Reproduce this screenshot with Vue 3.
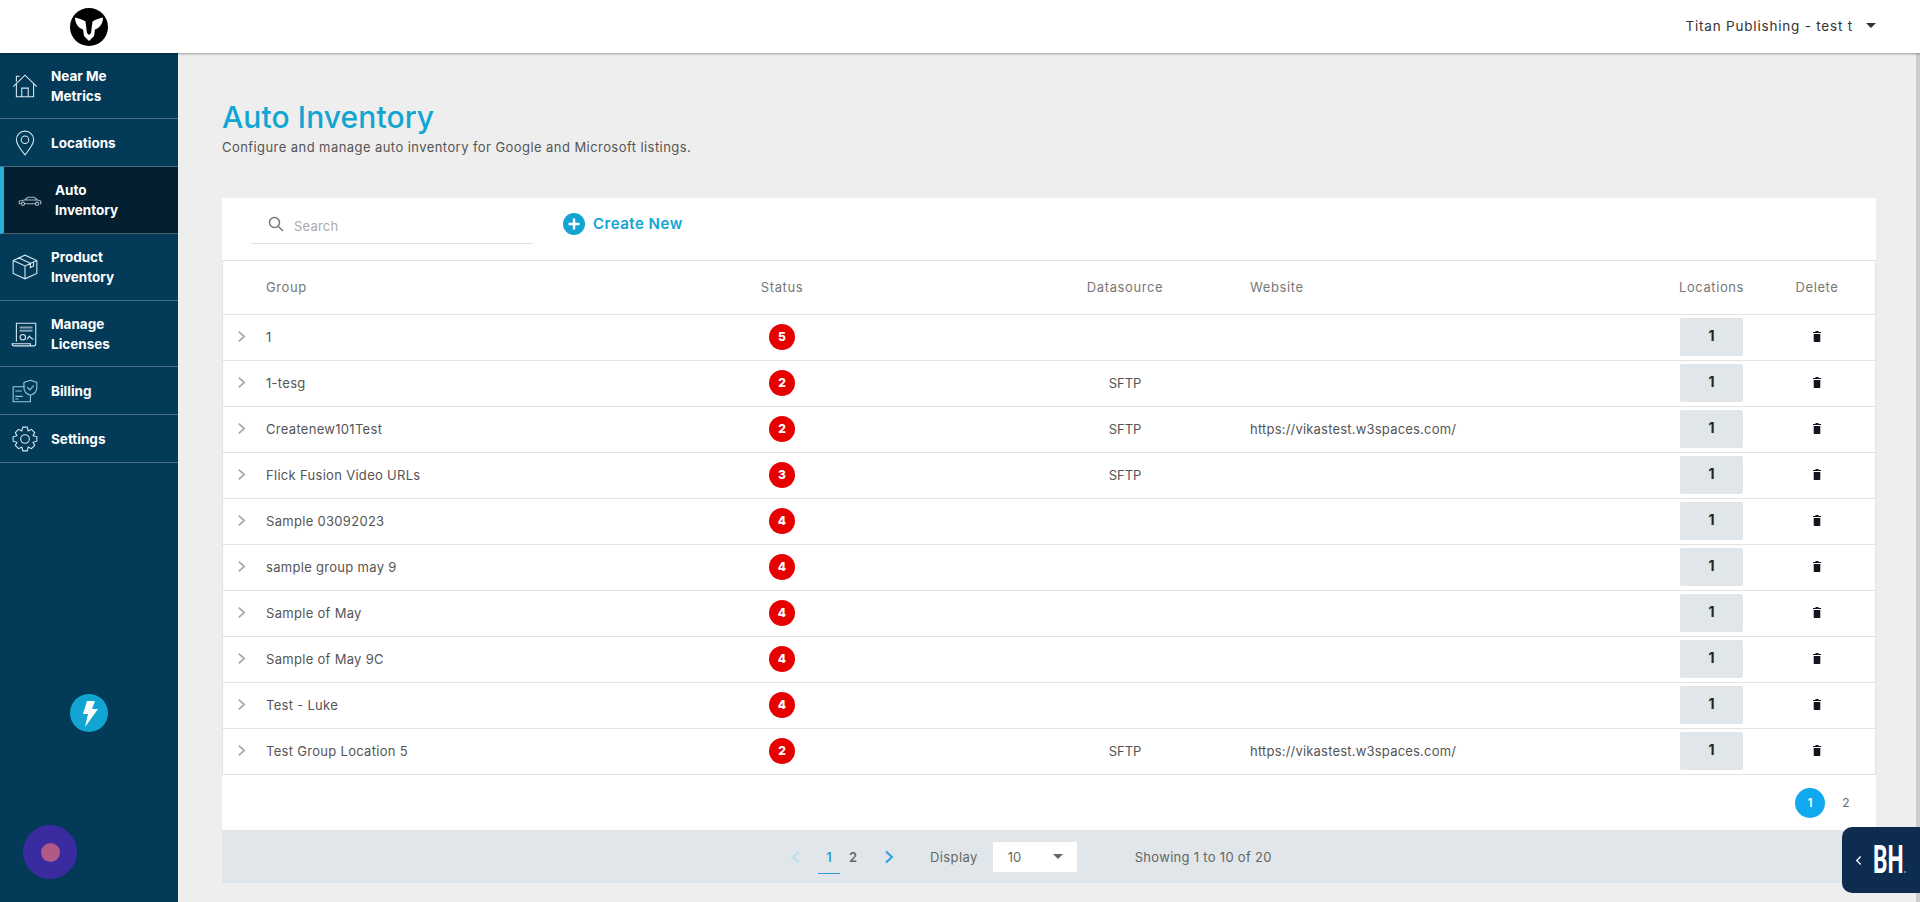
<template>
  <div class="app">
    <header class="topbar">
      <div class="logo-wrap">
        <svg class="logo" viewBox="0 0 38 38">
          <circle cx="19" cy="19" r="19" fill="#000" />
          <path d="M5 9.500C9 10 13 12 15.500 13.500L17 25l2 2 2-2 1.500-11.500C25 12 29 10 33 9.500 33 15 30 20 25 21.500L24 28l-5 5-5-5-1-6.500C8 20 5 15 5 9.500z" fill="#fff" />
        </svg>
      </div>
      <div class="account">
        <span>Titan Publishing - test t</span>
        <i class="caret"></i>
      </div>
    </header>

    <div class="body">
      <aside class="sidebar">
        <a
          v-for="item in menu"
          :key="item.key"
          class="nav-item"
          :class="[item.size, { active: item.key === 'auto' }]"
        >
          <span class="nav-icon">
            <svg v-if="item.key === 'metrics'" viewBox="0 0 26 26">
              <path d="M2 13.500 13 3l11 10.500M5 11v12h16V11M10 23v-8h6v8M5 9V4h3" />
            </svg>
            <svg v-else-if="item.key === 'locations'" viewBox="0 0 26 26">
              <path d="M13 24C8 18 5 14 5 10a8 8 0 0 1 16 0c0 4-3 8-8 14z" />
              <circle cx="13" cy="10" r="3.500" />
            </svg>
            <svg v-else-if="item.key === 'auto'" class="car" viewBox="0 0 26 26">
              <path d="M4.500 16.500H3v-2.500l5-1 3-2.500h6l3 2.500 3 1v2.500h-1M8 16.500h10M8 13h12" />
              <circle cx="6.500" cy="16.500" r="1.500" />
              <circle cx="19.500" cy="16.500" r="1.500" />
            </svg>
            <svg v-else-if="item.key === 'product'" viewBox="0 0 26 26">
              <path d="M2 7l11-5 11 5v12l-11 5-11-5zM2 7l11 5 11-5M13 12v12M7 4.500l11 5M18 9.500v4l3-1.500V8" />
            </svg>
            <svg v-else-if="item.key === 'licenses'" viewBox="0 0 26 26">
              <path d="M5 20V3h18v19a2 2 0 0 1-2 2H3a2 2 0 0 1-2-2h17v2" />
              <path d="M8 7h12M8 10h12" class="thick" />
              <circle cx="11" cy="16" r="2.500" />
              <path d="M15 18l2-3 2 2 2 1" />
            </svg>
            <svg v-else-if="item.key === 'billing'" class="billing" viewBox="0 0 26 26">
              <path d="M13 9H2v14h16v-6M4 13h6M4 18h7M4 20.500h3" />
              <path d="M18 3l6 2v5c0 4-3 6-6 7-3-1-6-3-6-7V5z" />
              <path d="M15 9.500l2.500 2.500 3.500-4" />
            </svg>
            <svg v-else viewBox="0 0 26 26">
              <path d="M11 2h4l1 3.500 3-1.500 3 3-1.500 3 3.500 1v4l-3.500 1 1.500 3-3 3-3-1.500L15 24h-4l-1-3.500L7 22l-3-3 1.500-3L2 15v-4l3.500-1L4 7l3-3 3 1.500z" />
              <circle cx="13" cy="13" r="4" />
            </svg>
          </span>
          <span class="nav-label">
            <span v-for="line in item.label" :key="line">{{ line }}</span>
          </span>
        </a>

        <div class="bolt">
          <svg viewBox="0 0 38 38">
            <path d="M17 7h8l-3 8h6L15 33l3-13h-5z" fill="#fff" />
          </svg>
        </div>
        <div class="chat"><i></i></div>
      </aside>

      <main class="main">
        <h1 class="title">Auto Inventory</h1>
        <p class="subtitle">Configure and manage auto inventory for Google and Microsoft listings.</p>

        <section class="card">
          <div class="toolbar">
            <div class="search">
              <svg viewBox="0 0 16 16">
                <circle cx="6.500" cy="6.500" r="5" />
                <path d="M10.500 10.500 15 15" />
              </svg>
              <span>Search</span>
            </div>
            <a class="create">
              <svg viewBox="0 0 22 22">
                <circle cx="11" cy="11" r="11" fill="#12a5d3" />
                <path d="M11 5.500v11M5.500 11h11" stroke="#fff" stroke-width="2.500" />
              </svg>
              <span>Create New</span>
            </a>
          </div>

          <div class="table">
            <div class="row head">
              <div class="c-group">Group</div>
              <div class="c-status">Status</div>
              <div class="c-source">Datasource</div>
              <div class="c-site">Website</div>
              <div class="c-loc">Locations</div>
              <div class="c-del">Delete</div>
            </div>
            <div v-for="row in rows" :key="row.group" class="row">
              <div class="c-group">
                <svg class="chev" viewBox="0 0 10 14"><path d="M2 1.500 8 7l-6 5.500" /></svg>
                {{ row.group }}
              </div>
              <div class="c-status"><span class="badge">{{ row.status }}</span></div>
              <div class="c-source">{{ row.source }}</div>
              <div class="c-site">{{ row.site }}</div>
              <div class="c-loc"><span class="loc-btn">1</span></div>
              <div class="c-del">
                <svg class="trash" viewBox="0 0 8 11">
                  <path d="M2.500 0h3v1H8v1H0V1h2.500zM.7 3h6.600v7.200a.8.8 0 0 1-.8.800h-5a.8.8 0 0 1-.8-.8z" />
                </svg>
              </div>
            </div>
          </div>

          <div class="pager">
            <span class="page-dot">1</span>
            <span class="page-num">2</span>
          </div>

          <div class="footer">
            <svg class="foot-chev prev" viewBox="0 0 10 14"><path d="M8 1.500 2 7l6 5.500" /></svg>
            <span class="foot-page current">1</span>
            <span class="foot-page">2</span>
            <svg class="foot-chev next" viewBox="0 0 10 14"><path d="M2 1.500 8 7l-6 5.500" /></svg>
            <span class="display">Display</span>
            <div class="select">
              <span>10</span>
              <i class="caret small"></i>
            </div>
            <span class="showing">Showing 1 to 10 of 20</span>
          </div>
        </section>
      </main>
      <div class="scrollbar"></div>
    </div>

    <div class="bh">
      <svg viewBox="0 0 8 12"><path d="M6.500 1.500 2 6l4.500 4.500" /></svg>
      <span class="bh-text">BH<em>.</em></span>
    </div>
  </div>
</template>

<script setup>
const menu = [
  { key: "metrics", label: ["Near Me", "Metrics"], size: "tall" },
  { key: "locations", label: ["Locations"], size: "short" },
  { key: "auto", label: ["Auto", "Inventory"], size: "tall" },
  { key: "product", label: ["Product", "Inventory"], size: "tall" },
  { key: "licenses", label: ["Manage", "Licenses"], size: "tall" },
  { key: "billing", label: ["Billing"], size: "short" },
  { key: "settings", label: ["Settings"], size: "short" },
];

const site = "https://vikastest.w3spaces.com/";

const rows = [
  { group: "1", status: 5, source: "", site: "" },
  { group: "1-tesg", status: 2, source: "SFTP", site: "" },
  { group: "Createnew101Test", status: 2, source: "SFTP", site },
  { group: "Flick Fusion Video URLs", status: 3, source: "SFTP", site: "" },
  { group: "Sample 03092023", status: 4, source: "", site: "" },
  { group: "sample group may 9", status: 4, source: "", site: "" },
  { group: "Sample of May", status: 4, source: "", site: "" },
  { group: "Sample of May 9C", status: 4, source: "", site: "" },
  { group: "Test - Luke", status: 4, source: "", site: "" },
  { group: "Test Group Location 5", status: 2, source: "SFTP", site },
];
</script>

<style>
html,
body {
  margin: 0;
  background: #eee;
}
</style>

<style scoped>
.app {
  position: relative;
  height: 902px;
  overflow: hidden;
  font-family: Inter, "Open Sans", sans-serif;
  color: #555;
}

.topbar {
  height: 53px;
  display: flex;
  align-items: center;
  justify-content: space-between;
  background: #fff;
  box-shadow: 0 1px 2px rgba(0, 0, 0, 0.35);
  position: relative;
  z-index: 2;
}

.logo-wrap {
  width: 178px;
  display: flex;
  justify-content: center;
}

.logo {
  width: 38px;
  height: 38px;
}

.account {
  display: flex;
  align-items: center;
  padding: 0 44px 2px 0;
  font-size: 13.500px;
  letter-spacing: 0.8px;
  color: #333;
}

.caret {
  display: inline-block;
  width: 0;
  height: 0;
  margin-left: 13px;
  border-left: 5px solid transparent;
  border-right: 5px solid transparent;
  border-top: 5px solid #333;
}

.caret.small {
  margin-left: 0;
  border-top-color: #666;
}

.body {
  display: flex;
  height: 849px;
}

.sidebar {
  position: relative;
  width: 178px;
  flex-shrink: 0;
  background: #033a58;
}

.nav-item {
  display: flex;
  align-items: center;
  box-sizing: border-box;
  border-bottom: 1px solid rgba(255, 255, 255, 0.28);
  color: #fff;
  font-size: 13.500px;
  font-weight: 700;
  line-height: 20px;
  padding-left: 11px;
}

.nav-item.tall {
  height: 67px;
}

.nav-item.short {
  height: 48px;
}

.nav-item:nth-child(1) {
  height: 66px;
}

.nav-item:nth-child(5) {
  height: 66px;
}

.nav-item.active {
  background: #041f30;
  border-left: 4px solid #2ab0d8;
  padding-left: 10px;
}

.nav-icon {
  width: 28px;
  height: 28px;
  margin-right: 12px;
  flex-shrink: 0;
}

.nav-icon svg {
  display: block;
  width: 100%;
  height: 100%;
  fill: none;
  stroke: #d8eaf2;
  stroke-width: 1;
}

.nav-icon .car {
  stroke: #a9b8c0;
  margin-left: 2px;
}

.nav-icon .billing {
  stroke: #8fcbe0;
}

.nav-icon .thick {
  stroke-width: 2;
  opacity: 0.6;
}

.active .nav-label {
  margin-left: 1px;
}

.nav-label span {
  display: block;
}

.bolt {
  position: absolute;
  left: 70px;
  top: 641px;
  width: 38px;
  height: 38px;
  border-radius: 50%;
  background: #12a5d3;
}

.bolt svg {
  display: block;
}

.chat {
  position: absolute;
  left: 23px;
  top: 772px;
  width: 54px;
  height: 54px;
  border-radius: 50%;
  background: #3a2ba0;
  display: flex;
  align-items: center;
  justify-content: center;
}

.chat i {
  width: 19px;
  height: 19px;
  border-radius: 50%;
  background: #b05a85;
}

.main {
  flex: 1;
  min-width: 0;
  padding: 46px 40px 0 44px;
}

.title {
  margin: 0;
  font-size: 30px;
  line-height: 36px;
  font-weight: 500;
  letter-spacing: 0.1px;
  color: #12a5d3;
}

.subtitle {
  margin: 2px 0 0;
  font-size: 13px;
  line-height: 20px;
  color: #555;
  letter-spacing: 0.43px;
}

.card {
  margin-top: 41px;
  background: #fff;
}

.toolbar {
  height: 62px;
  display: flex;
  box-sizing: border-box;
}

.search {
  width: 282px;
  height: 46px;
  margin-left: 29px;
  box-sizing: border-box;
  border-bottom: 1px solid #e4e4e4;
  display: flex;
  align-items: center;
  padding: 10px 0 0 17px;
  font-size: 13px;
  letter-spacing: 0.2px;
  color: #aaa;
}

.search svg {
  width: 16px;
  height: 16px;
  margin: -4px 10px 0 0;
  fill: none;
  stroke: #777;
  stroke-width: 1.500;
}

.create {
  display: flex;
  align-items: center;
  height: 51px;
  margin-left: 30px;
  font-size: 15px;
  font-weight: 600;
  letter-spacing: 0.5px;
  color: #12a5d3;
}

.create svg {
  width: 22px;
  height: 22px;
  margin-right: 8px;
}

.table {
  border: 1px solid #e2e2e2;
  border-bottom: none;
}

.row {
  display: grid;
  grid-template-columns: 509px 100px 418px 430px 63px 133px;
  align-items: center;
  height: 46px;
  padding-bottom: 2px;
  box-sizing: border-box;
  border-bottom: 1px solid #e2e2e2;
  font-size: 13px;
  color: #555;
}

.row.head {
  height: 54px;
  color: #777;
  letter-spacing: 0.6px;
}

.c-group {
  position: relative;
  padding-left: 43px;
  letter-spacing: 0.3px;
}

.head .c-group,
.head .c-site {
  letter-spacing: 0.6px;
}

.chev {
  position: absolute;
  left: 14px;
  top: 50%;
  width: 9px;
  height: 13px;
  margin-top: -6.500px;
  fill: none;
  stroke: #aaa;
  stroke-width: 2;
}

.c-status {
  text-align: center;
}

.badge {
  display: inline-block;
  width: 26px;
  height: 26px;
  border-radius: 50%;
  background: #e60000;
  color: #fff;
  font-size: 12px;
  font-weight: 800;
  line-height: 26px;
  vertical-align: middle;
}

.c-source {
  padding: 0 65px 0 233px;
  text-align: center;
}

.c-site {
  letter-spacing: 0.2px;
}

.c-loc {
  text-align: center;
  white-space: nowrap;
}

.head .c-loc {
  display: flex;
  justify-content: center;
}

.loc-btn {
  display: block;
  height: 38px;
  margin-top: 1px;
  border-radius: 2px;
  background: #e0e6e9;
  color: #222;
  font-size: 14px;
  font-weight: 700;
  line-height: 36px;
}

.c-del {
  padding-left: 15px;
  text-align: center;
}

.trash {
  display: inline-block;
  width: 8px;
  height: 11px;
  margin-bottom: 2px;
  vertical-align: middle;
  fill: #14141f;
}

.pager {
  height: 55px;
  display: flex;
  align-items: center;
  justify-content: flex-end;
  padding-right: 15px;
  font-size: 12px;
}

.page-dot {
  width: 30px;
  height: 30px;
  border-radius: 50%;
  background: #10a8ee;
  color: #fff;
  font-weight: 600;
  line-height: 30px;
  text-align: center;
}

.page-num {
  width: 30px;
  margin-left: 6px;
  text-align: center;
  color: #666;
}

.footer {
  height: 53px;
  display: flex;
  align-items: center;
  background: #e0e6e9;
  font-size: 13px;
  color: #666;
  padding-left: 569px;
}

.foot-chev {
  width: 10px;
  height: 14px;
  fill: none;
  stroke-width: 2;
}

.foot-chev.prev {
  stroke: #bcdcef;
}

.foot-chev.next {
  stroke: #2f9fd8;
  margin: 0 36px 0 20px;
}

.foot-page {
  position: relative;
  width: 22px;
  margin-left: 2px;
  text-align: center;
  font-weight: 600;
}

.foot-page.current {
  margin-left: 17px;
  color: #2f9fd8;
}

.foot-page.current::after {
  content: "";
  position: absolute;
  left: 0;
  right: 0;
  top: 24px;
  border-bottom: 1px solid #2f9fd8;
}

.display {
  letter-spacing: 0.4px;
}

.select {
  width: 84px;
  height: 30px;
  margin-left: 15px;
  box-sizing: border-box;
  background: #fff;
  display: flex;
  align-items: center;
  justify-content: space-between;
  padding: 0 14px 0 15px;
}

.showing {
  margin-left: 58px;
  letter-spacing: 0.3px;
}

.scrollbar {
  width: 4px;
  flex-shrink: 0;
  background: #ccc;
}

.bh {
  position: absolute;
  right: 0;
  top: 827px;
  width: 78px;
  height: 66px;
  box-sizing: border-box;
  border-radius: 10px 0 0 10px;
  background: #0d2c50;
  color: #fff;
  display: flex;
  align-items: center;
  padding-left: 13px;
  overflow: hidden;
}

.bh svg {
  flex-shrink: 0;
  width: 7px;
  height: 11px;
  fill: none;
  stroke: #fff;
  stroke-width: 1.500;
}

.bh-text {
  flex-shrink: 0;
  margin-left: 11px;
  font-family: Roboto, sans-serif;
  font-size: 38px;
  font-weight: 700;
  transform: scaleX(0.6);
  transform-origin: left center;
  white-space: nowrap;
}

.bh-text em {
  font-size: 14px;
  font-style: normal;
  color: #9ab;
}
</style>
